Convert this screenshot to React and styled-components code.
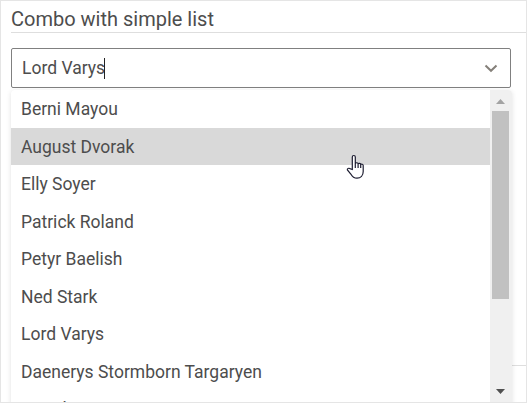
import React from "react";
import styled, { createGlobalStyle } from "styled-components";

const GlobalStyle = createGlobalStyle`
  * {
    box-sizing: border-box;
  }
  body {
    margin: 0;
    background: #fff;
    font-family: Roboto, "Liberation Sans", sans-serif;
    font-weight: 390;
    color: #4d4d4d;
  }
`;
const Page = styled.div`
  position: relative;
  height: 403px;
  padding: 0 0 0 10px;
  border: 1px solid #e5e5e5;
  overflow: hidden;
`;
const Title = styled.h2`
  height: 32px;
  margin: 0 0 15px;
  border-bottom: 1px solid #dedede;
  font-size: 20px;
  font-weight: inherit;
  line-height: 36px;
`;
const ComboBox = styled.div`
  display: flex;
  align-items: center;
  width: 500px;
  height: 40px;
  padding: 0 11px 0 10px;
  border: 1px solid #808080;
  border-radius: 2px;
  font-size: 17.5px;
`;
const Caret = styled.span`
  width: 1px;
  height: 21px;
  margin-left: -1px;
  background: #222;
`;
const Chevron = styled.svg`
  margin-left: auto;
`;
const NextSection = styled.div`
  height: 278px;
  border-bottom: 1px solid #dedede;
`;
const Dropdown = styled.div`
  position: absolute;
  top: 89px;
  left: 10px;
  display: flex;
  width: 501px;
  height: 340px;
  border-radius: 4px;
  background: #fff;
  box-shadow: 0 1px 5px rgba(0, 0, 0, 0.12);
  overflow: hidden;
`;
const List = styled.ul`
  flex: 1;
  margin: 0;
  padding: 0;
  list-style: none;
`;
const Item = styled.li`
  height: 37.5px;
  padding-left: 10px;
  background: ${(props) => (props.$active ? "#d9d9d9" : "transparent")};
  font-size: 17.5px;
  line-height: 39.5px;
`;
const Scrollbar = styled.div`
  display: flex;
  flex-direction: column;
  align-items: center;
  width: 22px;
  height: 312px;
  background: #f0f0f0;
`;
const Thumb = styled.div`
  width: 17px;
  height: 188px;
  margin-right: 1px;
  background: #c1c1c1;
`;
const Arrow = styled.svg`
  flex: none;
  margin-right: 1px;
  margin-top: ${(props) => (props.$down ? "auto" : "0")};
`;
const Pointer = styled.svg`
  position: absolute;
  top: 153px;
  left: 345px;
`;

const names = [
  "Berni Mayou",
  "August Dvorak",
  "Elly Soyer",
  "Patrick Roland",
  "Petyr Baelish",
  "Ned Stark",
  "Lord Varys",
  "Daenerys Stormborn Targaryen",
  "Brandon",
];

export default function App() {
  return (
    <>
      <GlobalStyle />
      <Page>
        <Title>Combo with simple list</Title>
        <ComboBox>
          <span>Lord Varys</span>
          <Caret />
          <Chevron width="16" height="16" viewBox="0 0 16 16">
            <path
              d="M2.500 5.500 8 10.800 13.500 5.500"
              fill="none"
              stroke="#85807a"
              strokeWidth="2"
            />
          </Chevron>
        </ComboBox>
        <NextSection />
        <Dropdown>
          <List>
            {names.map((name) => (
              <Item key={name} $active={name === "August Dvorak"}>
                {name}
              </Item>
            ))}
          </List>
          <Scrollbar>
            <Arrow width="17" height="21">
              <path d="M4 14h9L8.500 9z" fill="#a3a3a3" />
            </Arrow>
            <Thumb />
            <Arrow $down width="17" height="21">
              <path d="M4 8h9l-4.500 5z" fill="#505050" />
            </Arrow>
          </Scrollbar>
        </Dropdown>
        <Pointer width="20" height="26" viewBox="0 0 20 26">
          <path
            d="M6.300 15.500V3a1.500 1.500 0 0 1 3 0V9.500c.5-1.100 2.800-1 2.800.3.6-.7 2.600-.5 2.600.6.800-.6 2.500-.2 2.500 1V17.500c0 4-2.500 6.700-6.200 6.700-3 0-4.800-1.700-6.200-4.200L1.400 16c-.5-1.500 1.200-2.200 2.500-1.400zM9.300 9.500V14M12.100 9.800V14M14.700 10.400V14"
            fill="#fff"
            stroke="#1c1c30"
            strokeWidth="1.200"
          />
        </Pointer>
      </Page>
    </>
  );
}
